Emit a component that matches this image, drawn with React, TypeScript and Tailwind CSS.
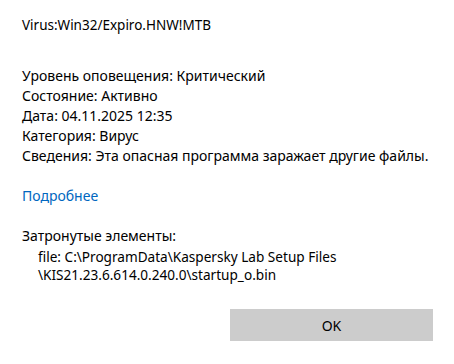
export default function App() {
  return (
    <div className="w-[454px] h-[364px] bg-white text-[#000] flex flex-col" style={{ fontFamily: '"Noto Sans", "Open Sans", sans-serif' }}>
      <div className="pl-[22px] pt-[15px] text-[13.5px] leading-[20px]">Virus:Win32/Expiro.HNW!MTB</div>
      <div className="pl-[22px] mt-[31px] text-[14px] leading-[20px] flex flex-col">
        <div>Уровень оповещения: Критический</div>
        <div>Состояние: Активно</div>
        <div>Дата: 04.11.2025 12:35</div>
        <div>Категория: Вирус</div>
        <div>Сведения: Эта опасная программа заражает другие файлы.</div>
      </div>
      <div className="pl-[22px] mt-[20px] text-[14px] leading-[20px] text-[#0067c0]">Подробнее</div>
      <div className="pl-[22px] mt-[20px] text-[14px] leading-[20px]">Затронутые элементы:</div>
      <div className="pl-[38px] mt-[2px] text-[13.6px] leading-[18px] flex flex-col">
        <div>file: C:\ProgramData\Kaspersky Lab Setup Files</div>
        <div>\KIS21.23.6.614.0.240.0\startup_o.bin</div>
      </div>
      <div className="flex justify-end pr-[21px] mt-[25px]">
        <button className="w-[203px] h-[32px] bg-[#cccccc] text-[14px] text-black">OK</button>
      </div>
    </div>
  );
}
